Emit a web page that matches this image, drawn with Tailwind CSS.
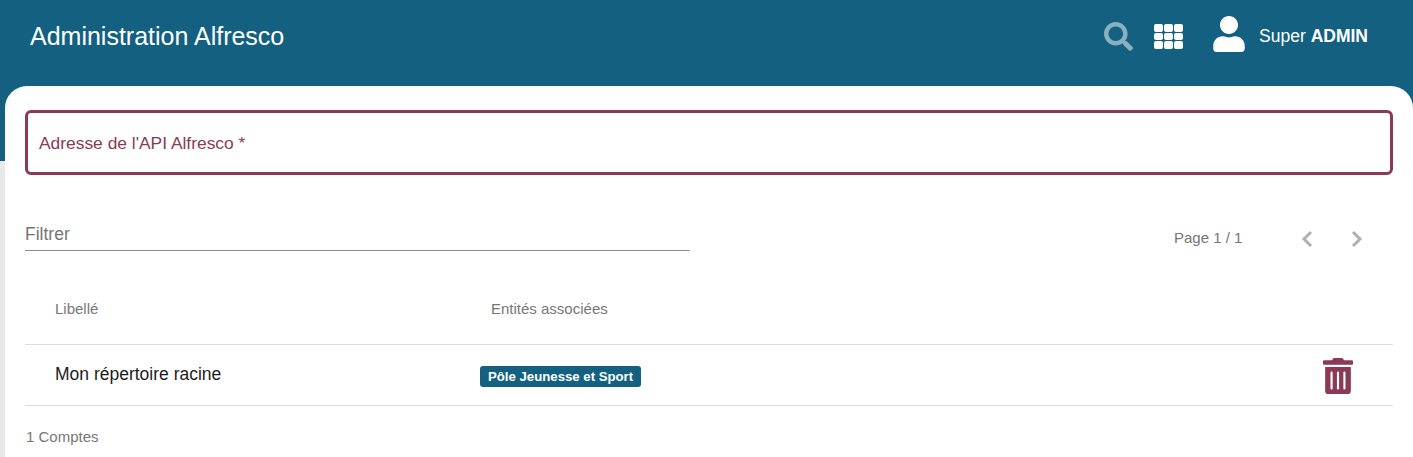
<!DOCTYPE html>
<html lang="fr">
<head>
    <meta charset="UTF-8">
    <title>Administration Alfresco</title>
    <script src="https://cdn.jsdelivr.net/npm/@tailwindcss/browser@4"></script>
</head>
<body class="bg-[#e8e8e8] font-['Liberation_Sans',Arial,sans-serif] h-[457px] overflow-hidden">
    <!-- header -->
    <header class="bg-[#136080] h-[161px] text-white flex items-start pl-[30px] pr-[45px] pt-[16px]">
        <h1 class="text-[25px] leading-[41px] flex-1">Administration Alfresco</h1>
        <svg class="w-[29px] h-[29px] mt-[6px] fill-white/50" viewBox="0 0 512 512"><path d="M505 442.7L405.3 343c-4.5-4.5-10.6-7-17-7H372c27.6-35.3 44-79.7 44-128C416 93.1 322.9 0 208 0S0 93.1 0 208s93.1 208 208 208c48.3 0 92.7-16.4 128-44v16.3c0 6.4 2.5 12.5 7 17l99.7 99.7c9.4 9.4 24.6 9.4 33.9 0l28.3-28.3c9.4-9.4 9.4-24.6.1-34zM208 336c-70.7 0-128-57.2-128-128 0-70.7 57.2-128 128-128 70.7 0 128 57.2 128 128 0 70.7-57.2 128-128 128z"/></svg>
        <div class="grid grid-cols-3 gap-[1px] w-[29px] h-[25px] mt-[8px] ml-[21px]">
            <span class="bg-white rounded-[2px]"></span><span class="bg-white rounded-[2px]"></span><span class="bg-white rounded-[2px]"></span>
            <span class="bg-white rounded-[2px]"></span><span class="bg-white rounded-[2px]"></span><span class="bg-white rounded-[2px]"></span>
            <span class="bg-white rounded-[2px]"></span><span class="bg-white rounded-[2px]"></span><span class="bg-white rounded-[2px]"></span>
        </div>
        <svg class="w-[32px] h-[36px] ml-[30px] fill-white" viewBox="0 0 448 512"><path d="M224 256c70.7 0 128-57.3 128-128S294.7 0 224 0 96 57.3 96 128s57.3 128 128 128zm89.6 32h-16.7c-22.2 10.2-46.9 16-72.9 16s-50.6-5.8-72.9-16h-16.7C60.2 288 0 348.2 0 422.4V464c0 26.5 21.5 48 48 48h352c26.5 0 48-21.5 48-48v-41.6c0-74.2-60.2-134.4-134.4-134.4z"/></svg>
        <div class="ml-[14px] text-[17.5px] leading-[40px]">Super <b>ADMIN</b></div>
    </header>

    <main class="bg-white ml-[5px] -mt-[75px] h-[371px] rounded-t-[22px] pl-[20px] pr-[20px] pt-[24px]">
        <div class="h-[65px] border-[3px] border-[#8b3a55] rounded-[6px] flex items-center pl-[11px] pt-[2px] text-[17.4px] text-[#8b3a55]">Adresse de l'API Alfresco *</div>

        <div class="flex items-start mt-[42px]">
            <div class="w-[665px] h-[34px] border-b border-[#8a8a8a] text-[17.5px] leading-[34px] text-[#757575]">Filtrer</div>
            <div class="ml-[484px] text-[15px] leading-[42px] text-[#757575]">Page 1 / 1</div>
            <svg class="w-[14px] h-[18px] ml-[58px] mt-[13px]" viewBox="0 0 14 18" fill="none" stroke="#b0b0b0" stroke-width="3"><path d="M11 2L4 9l7 7"/></svg>
            <svg class="w-[14px] h-[18px] ml-[36px] mt-[13px]" viewBox="0 0 14 18" fill="none" stroke="#b0b0b0" stroke-width="3"><path d="M3 2l7 7-7 7"/></svg>
        </div>

        <div class="grid grid-cols-[436px_1fr] h-[86px] border-b border-[#dedede] items-center pl-[30px] pt-[15px] text-[15px] text-[#777777]">
            <div>Libellé</div>
            <div>Entités associées</div>
        </div>
        <div class="grid grid-cols-[425px_1fr_auto] h-[61px] border-b border-[#dedede] items-center pl-[30px] pr-[40px]">
            <div class="text-[17.5px] text-[#1c1c1c] -mt-[1px]">Mon répertoire racine</div>
            <div class="mt-[2px]"><span class="inline-block bg-[#136080] text-white text-[13.2px] leading-[21px] font-bold px-[8px] rounded-[3px]">Pôle Jeunesse et Sport</span></div>
            <svg class="w-[30px] h-[36px] mt-[2px] fill-[#8b3a55]" viewBox="0 0 448 512" preserveAspectRatio="none"><path d="M32 464a48 48 0 0 0 48 48h288a48 48 0 0 0 48-48V128H32zm272-256a16 16 0 0 1 32 0v224a16 16 0 0 1-32 0zm-96 0a16 16 0 0 1 32 0v224a16 16 0 0 1-32 0zm-96 0a16 16 0 0 1 32 0v224a16 16 0 0 1-32 0zM432 32H312l-9.4-18.7A24 24 0 0 0 281.1 0H166.8a23.72 23.72 0 0 0-21.4 13.3L136 32H16A16 16 0 0 0 0 48v32a16 16 0 0 0 16 16h416a16 16 0 0 0 16-16V48a16 16 0 0 0-16-16z"/></svg>
        </div>
        <div class="mt-[23px] pl-[1px] text-[15px] leading-[16px] text-[#777777]">1 Comptes</div>
    </main>
</body>
</html>
